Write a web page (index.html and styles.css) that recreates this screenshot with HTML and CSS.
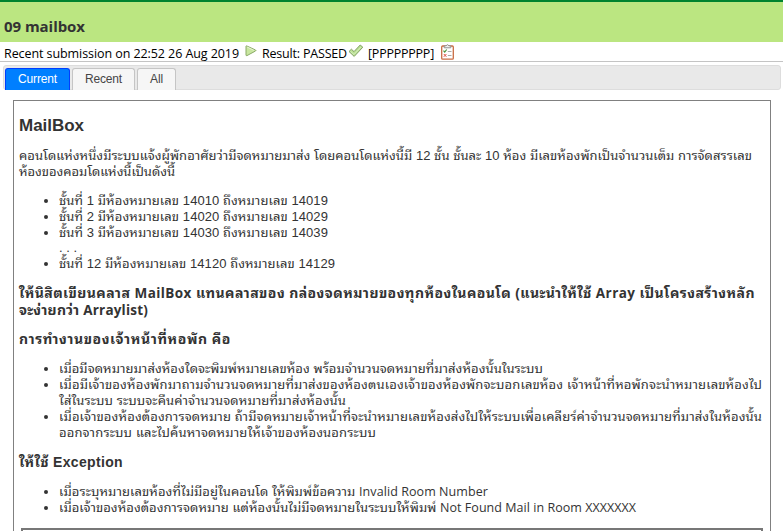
FILE: index.html
```html
<!DOCTYPE html>
<html lang="th">
<head>
<meta charset="utf-8">
<title>09 mailbox</title>
<link rel="stylesheet" href="styles.css">
</head>
<body>
<header class="title-bar"><h1><span class="line" data-width="81">09 mailbox</span></h1></header>
<div class="status">
  <span class="status-text recent"><span class="line" data-width="235">Recent submission on 22:52 26 Aug 2019</span></span>
  <svg class="play" width="12" height="12" viewBox="0 0 12 12"><path d="M1 1.2Q1 .7 1.7.9L10.5 5Q11.3 5.5 10.5 6L2 10.6Q1 11 1 10Z" fill="#c8e69f" stroke="#8aaa67"/><path d="M2.2 2.1L8.8 5.3" stroke="#e7f5d3"/></svg>
  <span class="status-text result"><span class="line" data-width="85">Result: PASSED</span></span>
  <svg class="check" width="16" height="14" viewBox="0 0 16 14"><path d="M1 7.5L3.4 5.2L6 7.6L12.2 1L14.8 3.2L6.2 12.4Z" fill="#b9e092" stroke="#83a165" stroke-linejoin="round"/><path d="M2.5 7.4L6 10.5L13 3.2" fill="none" stroke="#d8efbf"/></svg>
  <span class="status-text cases"><span class="line" data-width="66">[PPPPPPPP]</span></span>
  <svg class="clipboard" width="13" height="16" viewBox="0 0 13 16"><rect x=".7" y="2" width="11.6" height="13.2" rx="1" fill="#fff" stroke="#c96c43" stroke-width="1.3"/><path d="M3.2 3.8V1.8H5Q6.5-.5 8 1.8H9.8V3.8Z" fill="#eee" stroke="#888" stroke-width=".9"/><path d="M2.5 6.7L3.7 8L5.7 5.5" fill="none" stroke="#4b963d" stroke-width="1.2"/><path d="M6.8 7.5H10.5M6.8 11.5H10.5" stroke="#aaa"/><path d="M2.8 10L5.4 12.8M5.4 10L2.8 12.8" stroke="#da5142"/></svg>
</div>
<nav class="tabs">
  <a class="tab current"><span class="line" data-width="39">Current</span></a>
  <a class="tab recent-tab"><span class="line" data-width="37">Recent</span></a>
  <a class="tab all"><span class="line" data-width="13">All</span></a>
</nav>
<main class="problem">
  <h2><span class="line" data-width="65">MailBox</span></h2>
  <p><span class="line" data-width="733">คอนโดแห่งหนึ่งมีระบบแจ้งผู้พักอาศัยว่ามีจดหมายมาส่ง โดยคอนโดแห่งนี้มี 12 ชั้น ชั้นละ 10 ห้อง มีเลขห้องพักเป็นจำนวนเต็ม การจัดสรรเลข</span><br><span class="line" data-width="156">ห้องของคอมโดแห่งนี้เป็นดังนี้</span></p>
  <ul class="rooms">
    <li><span class="line" data-width="269">ชั้นที่ 1 มีห้องหมายเลข 14010 ถึงหมายเลข 14019</span></li>
    <li><span class="line" data-width="269">ชั้นที่ 2 มีห้องหมายเลข 14020 ถึงหมายเลข 14029</span></li>
    <li><span class="line" data-width="269">ชั้นที่ 3 มีห้องหมายเลข 14030 ถึงหมายเลข 14039</span></li>
    <li class="dots">. . .</li>
    <li><span class="line" data-width="276">ชั้นที่ 12 มีห้องหมายเลข 14120 ถึงหมายเลข 14129</span></li>
  </ul>
  <h3><span class="line" data-width="736">ให้นิสิตเขียนคลาส <span class="name">MailBox</span> แทนคลาสของ กล่องจดหมายของทุกห้องในคอนโด (แนะนำให้ใช้ <span class="name">Array</span> เป็นโครงสร้างหลัก</span><br><span class="line" data-width="129">จะง่ายกว่า <span class="name">Arraylist)</span></span></h3>
  <h3><span class="line" data-width="212">การทำงานของเจ้าหน้าที่หอพัก คือ</span></h3>
  <ul class="duties">
    <li><span class="line" data-width="484">เมื่อมีจดหมายมาส่งห้องใดจะพิมพ์หมายเลขห้อง พร้อมจำนวนจดหมายที่มาส่งห้องนั้นในระบบ</span></li>
    <li><span class="line" data-width="703">เมื่อมีเจ้าของห้องพักมาถามจำนวนจดหมายที่มาส่งของห้องตนเองเจ้าของห้องพักจะบอกเลขห้อง เจ้าหน้าที่หอพักจะนำหมายเลขห้องไป</span><br><span class="line" data-width="287">ใส่ในระบบ ระบบจะคืนค่าจำนวนจดหมายที่มาส่งห้องนั้น</span></li>
    <li><span class="line" data-width="703">เมื่อเจ้าของห้องต้องการจดหมาย ถ้ามีจดหมายเจ้าหน้าที่จะนำหมายเลขห้องส่งไปให้ระบบเพื่อเคลียร์ค่าจำนวนจดหมายที่มาส่งในห้องนั้น</span><br><span class="line" data-width="317">ออกจากระบบ และไปค้นหาจดหมายให้เจ้าของห้องนอกระบบ</span></li>
  </ul>
  <h3 class="exception"><span class="line" data-width="104">ให้ใช้ <span class="name">Exception</span></span></h3>
  <ul>
    <li><span class="line" data-width="429">เมื่อระบุหมายเลขห้องที่ไม่มีอยู่ในคอนโด ให้พิมพ์ข้อความ <span class="latin">Invalid Room Number</span></span></li>
    <li><span class="line" data-width="577">เมื่อเจ้าของห้องต้องการจดหมาย แต่ห้องนั้นไม่มีจดหมายในระบบให้พิมพ์ <span class="latin">Not Found Mail in Room XXXXXXX</span></span></li>
  </ul>
  <div class="sample"></div>
</main>
<script src="lines.js"></script>
</body>
</html>
```
FILE: styles.css
```css
* { box-sizing: border-box; }
body {
  margin: 0;
  height: 531px;
  overflow: hidden;
  background: #fff;
  color: #333;
  font: 13px/16px "Liberation Sans", "Noto Sans Thai Looped", "Loma", "Waree", "Noto Sans Thai", "Noto Sans", sans-serif;
}
.line { display: inline-block; white-space: nowrap; vertical-align: top; }
.title-bar {
  height: 42px;
  border-top: 2px solid #00832f;
  background: #bbe681;
  padding: 14px 0 0 4px;
}
h1 { margin: 0; font: bold 15px/20px "Open Sans", sans-serif; color: #333; }
.status {
  display: flex;
  height: 20px;
  border-bottom: 1px solid #c4c4c4;
  padding-left: 4px;
  color: #000;
  font: 12.5px/18px "Open Sans", sans-serif;
}
.status-text { padding-top: 3px; }
.recent { width: 241px; }
.play { margin-top: 3px; margin-right: 5px; }
.result { width: 86px; }
.check { margin-top: 2px; margin-right: 4px; }
.cases { width: 73px; }
.clipboard { margin-top: 2px; }
.tabs {
  display: flex;
  gap: 2px;
  width: 778px;
  height: 25px;
  margin: 3px 0 0 3px;
  padding: 2px 0 0 1px;
  border: 1px solid #ddd;
  border-radius: 3px;
  background: #e9e9e9;
}
.tab {
  height: 22px;
  border: 1px solid #c5c5c5;
  border-bottom: 0;
  border-radius: 3px 3px 0 0;
  background: #f6f6f6;
  color: #454545;
  font-size: 12px;
  line-height: 21px;
  padding-left: 12px;
}
.current { width: 65px; background: #007fff; border-color: #003eff; color: #fff; }
.recent-tab { width: 63px; }
.all { width: 39px; }
.problem {
  width: 758px;
  height: 440px;
  margin: 10px 0 0 13px;
  border: 1px solid #808080;
  border-bottom: 0;
  padding: 0 5px;
}
h2 { margin: 15px 0 12px; font-size: 17px; line-height: 20px; }
p { margin: 0 0 13px; height: 32px; }
ul { margin: 0 0 13px; padding-left: 40px; }
li { min-height: 16px; }
.rooms .dots { list-style: none; height: 15px; min-height: 0; line-height: 13px; }
.rooms { margin-bottom: 12px; }
.duties { padding-top: 2px; margin-bottom: 13px; }
h3 {
  margin: 0 0 12px;
  font: bold 14px/17px "Open Sans", "Noto Sans Thai Looped", "Loma", "Waree", "Noto Sans Thai", sans-serif;
}
.name { font-size: 13.5px; line-height: 1; }
.exception { margin-bottom: 13px; font-family: "Liberation Sans", "Noto Sans Thai Looped", "Loma", "Waree", "Noto Sans Thai", sans-serif; }
.exception .name { font-size: 14px; }
.latin { font-family: "Open Sans", sans-serif; font-size: 12.5px; line-height: 1; }
.sample { height: 8px; margin: -1px 2px 0; border: 2px solid #777; border-bottom: 0; }
```
FILE: lines.js
```js
// Track each line so it fills its measure.
document.querySelectorAll('.line').forEach(function (line) {
  var target = Number(line.dataset.width);
  var natural = line.getBoundingClientRect().width;
  line.style.letterSpacing = '1px';
  var step = line.getBoundingClientRect().width - natural;
  line.style.letterSpacing = (target - natural) / step + 'px';
});
```
